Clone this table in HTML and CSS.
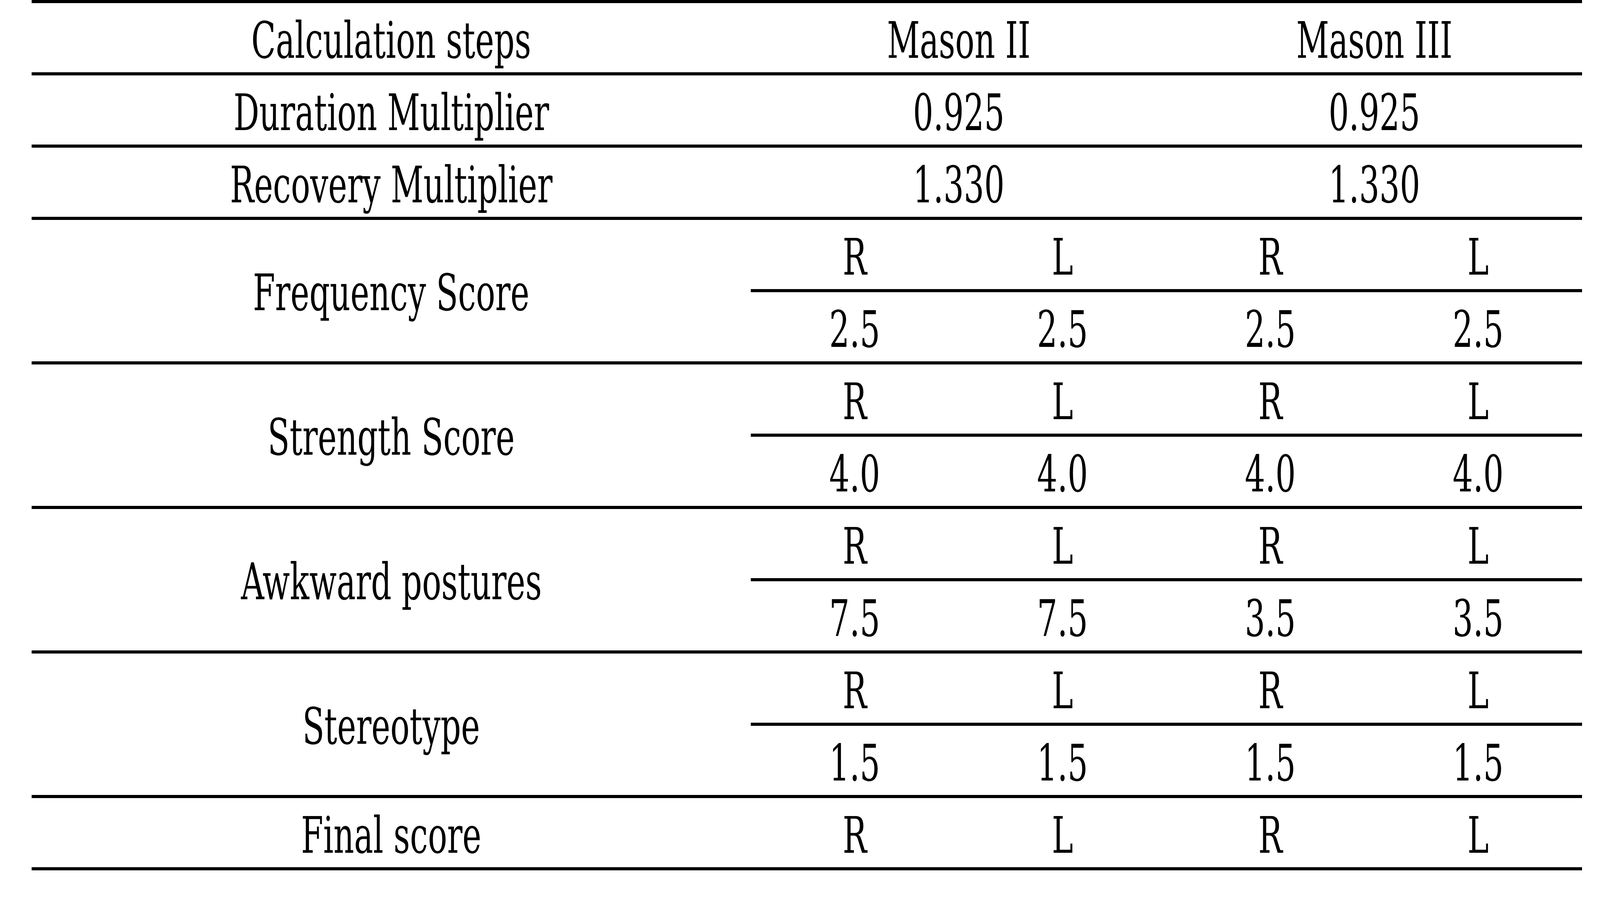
FILE: index.html
```html
<!DOCTYPE html>
<html lang="en">
<head>
<meta charset="utf-8">
<title>Calculation steps</title>
<link rel="stylesheet" href="styles.css">
</head>
<body>
<main class="page">
<table class="calc">
  <colgroup>
    <col class="c-step">
    <col class="c-val"><col class="c-val"><col class="c-val"><col class="c-val">
  </colgroup>
  <tbody>
    <tr>
      <td><span class="t">Calculation steps</span></td>
      <td colspan="2"><span class="t">Mason II</span></td>
      <td colspan="2"><span class="t">Mason III</span></td>
    </tr>
    <tr>
      <td><span class="t">Duration Multiplier</span></td>
      <td colspan="2"><span class="t">0.925</span></td>
      <td colspan="2"><span class="t">0.925</span></td>
    </tr>
    <tr>
      <td><span class="t">Recovery Multiplier</span></td>
      <td colspan="2"><span class="t">1.330</span></td>
      <td colspan="2"><span class="t">1.330</span></td>
    </tr>
    <tr>
      <td rowspan="2" class="span2"><span class="t">Frequency Score</span></td>
      <td><span class="t">R</span></td><td><span class="t">L</span></td><td><span class="t">R</span></td><td><span class="t">L</span></td>
    </tr>
    <tr>
      <td><span class="t">2.5</span></td><td><span class="t">2.5</span></td><td><span class="t">2.5</span></td><td><span class="t">2.5</span></td>
    </tr>
    <tr>
      <td rowspan="2" class="span2"><span class="t">Strength Score</span></td>
      <td><span class="t">R</span></td><td><span class="t">L</span></td><td><span class="t">R</span></td><td><span class="t">L</span></td>
    </tr>
    <tr>
      <td><span class="t">4.0</span></td><td><span class="t">4.0</span></td><td><span class="t">4.0</span></td><td><span class="t">4.0</span></td>
    </tr>
    <tr>
      <td rowspan="2" class="span2"><span class="t">Awkward postures</span></td>
      <td><span class="t">R</span></td><td><span class="t">L</span></td><td><span class="t">R</span></td><td><span class="t">L</span></td>
    </tr>
    <tr>
      <td><span class="t">7.5</span></td><td><span class="t">7.5</span></td><td><span class="t">3.5</span></td><td><span class="t">3.5</span></td>
    </tr>
    <tr>
      <td rowspan="2" class="span2"><span class="t">Stereotype</span></td>
      <td><span class="t">R</span></td><td><span class="t">L</span></td><td><span class="t">R</span></td><td><span class="t">L</span></td>
    </tr>
    <tr>
      <td><span class="t">1.5</span></td><td><span class="t">1.5</span></td><td><span class="t">1.5</span></td><td><span class="t">1.5</span></td>
    </tr>
    <tr class="last">
      <td><span class="t">Final score</span></td>
      <td><span class="t">R</span></td><td><span class="t">L</span></td><td><span class="t">R</span></td><td><span class="t">L</span></td>
    </tr>
  </tbody>
</table>
</main>
</body>
</html>
```
FILE: styles.css
```css
/* Horizontal measures follow the 5850px-wide reference, expressed in vw
   (1 reference px = 100vw / 5850); vertical measures are plain px. */
:root {
  --sx: 0.70017;
}

@media (min-width: 5800px) {
  :root { --sx: 1; }
}

html, body {
  margin: 0;
  padding: 0;
  background: #ffffff;
}

.page {
  padding-left: 1.983vw;
}

.calc {
  border-collapse: separate;
  border-spacing: 0;
  table-layout: fixed;
  width: 96.89vw;
  font-family: "DejaVu Serif Condensed", "DejaVu Serif", "Liberation Serif", serif;
  font-stretch: condensed;
  font-size: 130px;
  color: #000000;
}

.c-step { width: 44.94vw; }
.c-val { width: 12.99vw; }

.calc td {
  height: 165px;
  padding: 12px 0 0 0;
  box-sizing: content-box;
  border-top: 8px solid #000000;
  text-align: center;
  vertical-align: middle;
  line-height: 1;
  white-space: nowrap;
  overflow: visible;
}

.calc td.span2 {
  padding-top: 10px;
}

.calc .last td {
  border-bottom: 8px solid #000000;
}

.t {
  display: inline-block;
  transform: scaleX(var(--sx));
  transform-origin: 50% 50%;
}
```
